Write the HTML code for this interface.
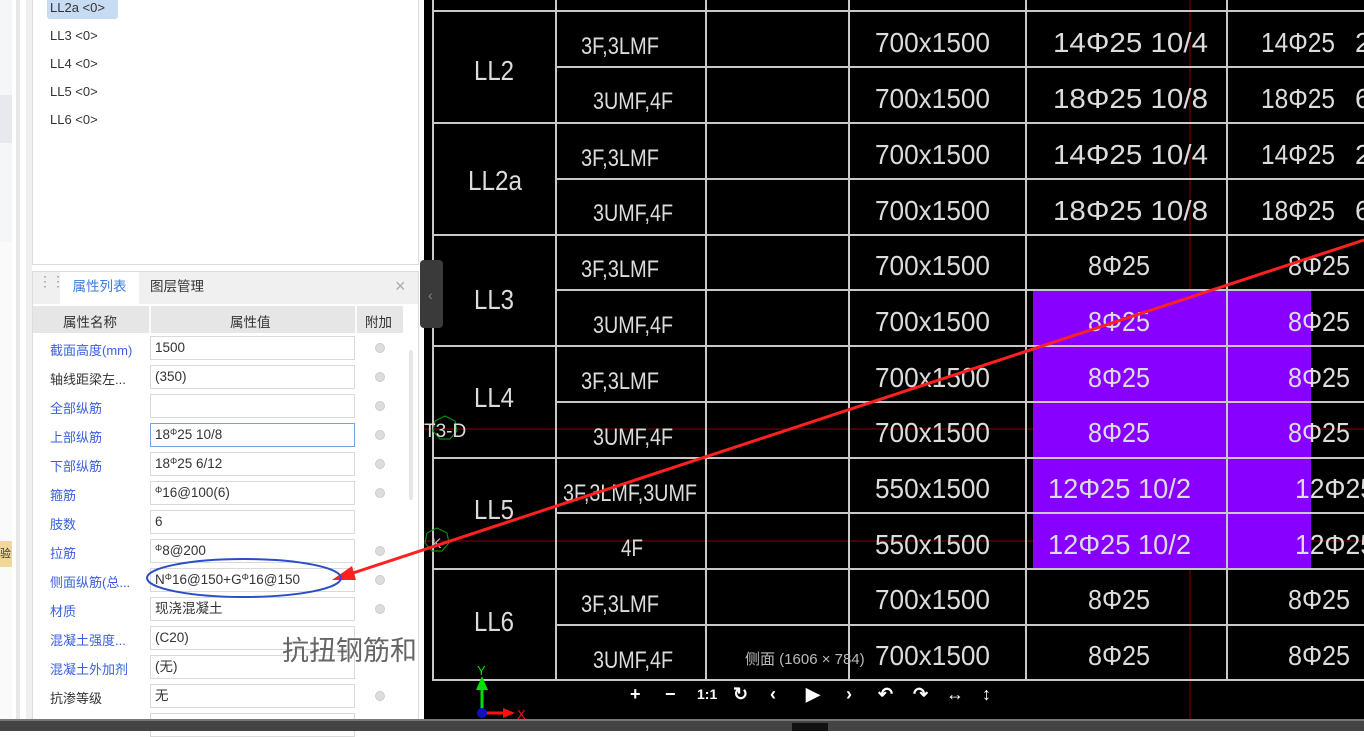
<!DOCTYPE html>
<html><head><meta charset="utf-8"><style>
*{margin:0;padding:0;box-sizing:border-box}
body{width:1364px;height:731px;overflow:hidden;background:#fff;position:relative;font-family:"Liberation Sans","Noto Sans CJK SC",sans-serif;font-size:13px;color:#333}
.abs{position:absolute}
.item{position:absolute;left:50px;font-size:13px;color:#333}
.lbl{position:absolute;left:50px;font-size:13px;color:#3a5fe0;white-space:nowrap}
.lbl.k{color:#333}
.inp{position:absolute;left:150px;width:205px;height:24px;border:1px solid #d9d9d9;background:#fff;padding-left:4px;line-height:22px;font-size:13.5px;color:#333;white-space:nowrap}
.inp i{font-style:normal;font-size:9px;position:relative;top:-4px}
.rad{position:absolute;left:375px;width:10px;height:10px;border-radius:50%;background:#ddd;border:1px solid #ccc}
.c{fill:#dcdcdc;font-family:"DejaVu Sans ExtraLight","Liberation Sans",sans-serif}
</style></head><body>
<div class="abs" style="left:0;top:0;width:12px;height:719px;background:#f5f6f8"></div>
<div class="abs" style="left:0;top:95px;width:12px;height:48px;background:#e8e9ec"></div>
<div class="abs" style="left:0;top:242px;width:12px;height:480px;background:#fafafa"></div>
<div class="abs" style="left:0;top:541px;width:12px;height:26px;background:#f2d79a;font-size:11px;line-height:26px;overflow:hidden">验</div>
<div class="abs" style="left:16px;top:0;width:4px;height:719px;background:#e8e8e8"></div>
<div class="abs" style="left:26px;top:0;width:6px;height:719px;background:#efefef"></div>
<div class="abs" style="left:32px;top:-2px;width:387px;height:267px;border:1px solid #ddd;background:#fff"></div>
<div class="abs" style="left:47px;top:-2px;width:71px;height:21px;background:#c7dcf2;border-radius:3px"></div>
<div class="item" style="top:0px">LL2a &lt;0&gt;</div>
<div class="item" style="top:28px">LL3 &lt;0&gt;</div>
<div class="item" style="top:56px">LL4 &lt;0&gt;</div>
<div class="item" style="top:84px">LL5 &lt;0&gt;</div>
<div class="item" style="top:112px">LL6 &lt;0&gt;</div>
<div class="abs" style="left:32px;top:271px;width:387px;height:460px;border:1px solid #ddd;background:#fff"></div>
<div class="abs" style="left:33px;top:272px;width:385px;height:32px;background:#f0f0f0"></div>
<div class="abs" style="left:38px;top:278px;color:#999;font-size:14px;letter-spacing:-1px;line-height:6px">⋮⋮</div>
<div class="abs" style="left:60px;top:272px;width:79px;height:32px;background:#fff;color:#3a7be0;font-size:13.5px;text-align:center;line-height:30px">属性列表</div>
<div class="abs" style="left:150px;top:272px;color:#333;font-size:13.5px;line-height:30px">图层管理</div>
<div class="abs" style="left:395px;top:276px;color:#aaa;font-size:18px">×</div>
<div class="abs" style="left:33px;top:306px;width:370px;height:27px;background:#e6e6e6"></div>
<div class="abs" style="left:149px;top:306px;width:2px;height:27px;background:#fafafa"></div>
<div class="abs" style="left:355px;top:306px;width:2px;height:27px;background:#fafafa"></div>
<div class="abs" style="left:63px;top:311px;font-size:13.5px">属性名称</div>
<div class="abs" style="left:230px;top:311px;font-size:13.5px">属性值</div>
<div class="abs" style="left:365px;top:311px;font-size:13.5px">附加</div>
<div class="abs" style="left:409px;top:350px;width:4px;height:150px;background:#e6e6e6;border-radius:2px"></div>

<div class="lbl" style="top:340px">截面高度(mm)</div><div class="inp" style="top:336px">1500</div><div class="rad" style="top:343px"></div>
<div class="lbl k" style="top:369px">轴线距梁左...</div><div class="inp" style="top:365px">(350)</div><div class="rad" style="top:372px"></div>
<div class="lbl" style="top:398px">全部纵筋</div><div class="inp" style="top:394px"></div><div class="rad" style="top:401px"></div>
<div class="lbl" style="top:427px">上部纵筋</div><div class="inp" style="top:423px;border-color:#7a9fe0">18<i>Φ</i>25 10/8</div><div class="rad" style="top:430px"></div>
<div class="lbl" style="top:456px">下部纵筋</div><div class="inp" style="top:452px">18<i>Φ</i>25 6/12</div><div class="rad" style="top:459px"></div>
<div class="lbl" style="top:485px">箍筋</div><div class="inp" style="top:481px"><i>Φ</i>16@100(6)</div><div class="rad" style="top:488px"></div>
<div class="lbl" style="top:514px">肢数</div><div class="inp" style="top:510px">6</div>
<div class="lbl" style="top:543px">拉筋</div><div class="inp" style="top:539px"><i>Φ</i>8@200</div><div class="rad" style="top:546px"></div>
<div class="lbl" style="top:572px">侧面纵筋(总...</div><div class="inp" style="top:568px">N<i>Φ</i>16@150+G<i>Φ</i>16@150</div><div class="rad" style="top:575px"></div>
<div class="lbl" style="top:601px">材质</div><div class="inp" style="top:597px">现浇混凝土</div><div class="rad" style="top:604px"></div>
<div class="lbl" style="top:630px">混凝土强度...</div><div class="inp" style="top:626px">(C20)</div>
<div class="lbl" style="top:659px">混凝土外加剂</div><div class="inp" style="top:655px">(无)</div>
<div class="lbl k" style="top:688px">抗渗等级</div><div class="inp" style="top:684px">无</div><div class="rad" style="top:691px"></div>
<div class="inp" style="top:713px"></div>

<svg class="abs" style="left:0;top:0" width="1364" height="731" viewBox="0 0 1364 731">
<rect x="424" y="0" width="940" height="719" fill="#000"/>
<g stroke="#8a0000" stroke-width="1">
<line x1="1190" y1="0" x2="1190" y2="719"/>
<line x1="424" y1="429" x2="1364" y2="429"/>
<line x1="424" y1="541" x2="1364" y2="541"/>
</g>
<rect x="1033" y="290" width="278" height="279" fill="#8800ff"/>
<g stroke="#c8c8c8" stroke-width="2" fill="none">
<line x1="433" y1="0" x2="433" y2="681"/>
<line x1="556" y1="0" x2="556" y2="681"/>
<line x1="706" y1="0" x2="706" y2="681"/>
<line x1="849" y1="0" x2="849" y2="681"/>
<line x1="1026" y1="0" x2="1026" y2="681"/>
<line x1="1227" y1="0" x2="1227" y2="681"/>
<line x1="433" y1="11" x2="1364" y2="11"/>
<line x1="433" y1="123" x2="1364" y2="123"/>
<line x1="433" y1="235" x2="1364" y2="235"/>
<line x1="433" y1="346" x2="1364" y2="346"/>
<line x1="433" y1="458" x2="1364" y2="458"/>
<line x1="433" y1="569" x2="1364" y2="569"/>
<line x1="433" y1="680" x2="1364" y2="680"/>
<line x1="556" y1="67" x2="1364" y2="67"/>
<line x1="556" y1="179" x2="1364" y2="179"/>
<line x1="556" y1="290" x2="1364" y2="290"/>
<line x1="556" y1="402" x2="1364" y2="402"/>
<line x1="556" y1="513" x2="1364" y2="513"/>
<line x1="556" y1="625" x2="1364" y2="625"/>
</g>
<g class="c" font-size="28">
<text x="474" y="80" textLength="40" lengthAdjust="spacingAndGlyphs">LL2</text>
<text x="468" y="190" textLength="54" lengthAdjust="spacingAndGlyphs">LL2a</text>
<text x="474" y="309" textLength="40" lengthAdjust="spacingAndGlyphs">LL3</text>
<text x="474" y="407" textLength="40" lengthAdjust="spacingAndGlyphs">LL4</text>
<text x="474" y="519" textLength="40" lengthAdjust="spacingAndGlyphs">LL5</text>
<text x="474" y="631" textLength="40" lengthAdjust="spacingAndGlyphs">LL6</text>
</g>
<g class="c" font-size="24">
<text x="581" y="54" textLength="78" lengthAdjust="spacingAndGlyphs">3F,3LMF</text>
<text x="593" y="109" textLength="80" lengthAdjust="spacingAndGlyphs">3UMF,4F</text>
<text x="581" y="166" textLength="78" lengthAdjust="spacingAndGlyphs">3F,3LMF</text>
<text x="593" y="221" textLength="80" lengthAdjust="spacingAndGlyphs">3UMF,4F</text>
<text x="581" y="277" textLength="78" lengthAdjust="spacingAndGlyphs">3F,3LMF</text>
<text x="593" y="333" textLength="80" lengthAdjust="spacingAndGlyphs">3UMF,4F</text>
<text x="581" y="389" textLength="78" lengthAdjust="spacingAndGlyphs">3F,3LMF</text>
<text x="593" y="445" textLength="80" lengthAdjust="spacingAndGlyphs">3UMF,4F</text>
<text x="563" y="501" textLength="134" lengthAdjust="spacingAndGlyphs">3F,3LMF,3UMF</text>
<text x="621" y="556" textLength="22" lengthAdjust="spacingAndGlyphs">4F</text>
<text x="581" y="612" textLength="78" lengthAdjust="spacingAndGlyphs">3F,3LMF</text>
<text x="593" y="668" textLength="80" lengthAdjust="spacingAndGlyphs">3UMF,4F</text>
</g>
<g class="c" font-size="28">
<text x="875" y="52" textLength="115" lengthAdjust="spacingAndGlyphs">700x1500</text>
<text x="875" y="108" textLength="115" lengthAdjust="spacingAndGlyphs">700x1500</text>
<text x="875" y="164" textLength="115" lengthAdjust="spacingAndGlyphs">700x1500</text>
<text x="875" y="220" textLength="115" lengthAdjust="spacingAndGlyphs">700x1500</text>
<text x="875" y="275" textLength="115" lengthAdjust="spacingAndGlyphs">700x1500</text>
<text x="875" y="331" textLength="115" lengthAdjust="spacingAndGlyphs">700x1500</text>
<text x="875" y="387" textLength="115" lengthAdjust="spacingAndGlyphs">700x1500</text>
<text x="875" y="442" textLength="115" lengthAdjust="spacingAndGlyphs">700x1500</text>
<text x="875" y="498" textLength="115" lengthAdjust="spacingAndGlyphs">550x1500</text>
<text x="875" y="554" textLength="115" lengthAdjust="spacingAndGlyphs">550x1500</text>
<text x="875" y="609" textLength="115" lengthAdjust="spacingAndGlyphs">700x1500</text>
<text x="875" y="665" textLength="115" lengthAdjust="spacingAndGlyphs">700x1500</text>
<text x="1053" y="52" textLength="155" lengthAdjust="spacingAndGlyphs">14Φ25  10/4</text>
<text x="1053" y="108" textLength="155" lengthAdjust="spacingAndGlyphs">18Φ25  10/8</text>
<text x="1053" y="164" textLength="155" lengthAdjust="spacingAndGlyphs">14Φ25  10/4</text>
<text x="1053" y="220" textLength="155" lengthAdjust="spacingAndGlyphs">18Φ25  10/8</text>
<text x="1088" y="275" textLength="62" lengthAdjust="spacingAndGlyphs">8Φ25</text>
<text x="1088" y="331" textLength="62" lengthAdjust="spacingAndGlyphs">8Φ25</text>
<text x="1088" y="387" textLength="62" lengthAdjust="spacingAndGlyphs">8Φ25</text>
<text x="1088" y="442" textLength="62" lengthAdjust="spacingAndGlyphs">8Φ25</text>
<text x="1048" y="498" textLength="143" lengthAdjust="spacingAndGlyphs">12Φ25 10/2</text>
<text x="1048" y="554" textLength="143" lengthAdjust="spacingAndGlyphs">12Φ25 10/2</text>
<text x="1088" y="609" textLength="62" lengthAdjust="spacingAndGlyphs">8Φ25</text>
<text x="1088" y="665" textLength="62" lengthAdjust="spacingAndGlyphs">8Φ25</text>
<text x="1261" y="52" textLength="74" lengthAdjust="spacingAndGlyphs">14Φ25</text><text x="1355" y="52">2</text>
<text x="1261" y="108" textLength="74" lengthAdjust="spacingAndGlyphs">18Φ25</text><text x="1355" y="108">6</text>
<text x="1261" y="164" textLength="74" lengthAdjust="spacingAndGlyphs">14Φ25</text><text x="1355" y="164">2</text>
<text x="1261" y="220" textLength="74" lengthAdjust="spacingAndGlyphs">18Φ25</text><text x="1355" y="220">6</text>
<text x="1288" y="275" textLength="62" lengthAdjust="spacingAndGlyphs">8Φ25</text>
<text x="1288" y="331" textLength="62" lengthAdjust="spacingAndGlyphs">8Φ25</text>
<text x="1288" y="387" textLength="62" lengthAdjust="spacingAndGlyphs">8Φ25</text>
<text x="1288" y="442" textLength="62" lengthAdjust="spacingAndGlyphs">8Φ25</text>
<text x="1295" y="498" textLength="80" lengthAdjust="spacingAndGlyphs">12Φ25</text>
<text x="1295" y="554" textLength="80" lengthAdjust="spacingAndGlyphs">12Φ25</text>
<text x="1288" y="609" textLength="62" lengthAdjust="spacingAndGlyphs">8Φ25</text>
<text x="1288" y="665" textLength="62" lengthAdjust="spacingAndGlyphs">8Φ25</text>
</g>
<polygon points="445,416 455,421 457,431 450,439 440,439 433,431 435,421" fill="none" stroke="#0a8a0a" stroke-width="1.2"/>
<text x="424" y="437" class="c" font-size="19">T3-D</text>
<polygon points="437,528 447,533 449,543 442,551 432,551 425,543 427,533" fill="none" stroke="#0a8a0a" stroke-width="1.2"/>
<text x="432" y="548" fill="#ccc" font-family="Liberation Sans,sans-serif" font-size="14">K</text>
<rect x="420" y="260" width="23" height="68" rx="4" fill="#3a3a3a"/>
<text x="428" y="300" fill="#888" font-size="14" font-family="Liberation Sans,sans-serif">‹</text>
<text x="282" y="660" fill="#666" font-family="Liberation Sans,Noto Sans CJK SC,sans-serif" font-size="27">抗扭钢筋和</text>
<text x="745" y="664" fill="#bbb" font-family="Liberation Sans,Noto Sans CJK SC,sans-serif" font-size="15">侧面 (1606 × 784)</text>
<line x1="1364" y1="240" x2="350" y2="574" stroke="#ff2020" stroke-width="3"/>
<polygon points="332,580 352,566 356,580" fill="#ff2020"/>
<ellipse cx="244" cy="578" rx="97" ry="19" fill="none" stroke="#2a4ec8" stroke-width="2"/>
<g fill="#fff" font-family="Liberation Sans,sans-serif" font-weight="bold" font-size="18">
<text x="630" y="700">+</text><text x="665" y="700">−</text><text x="697" y="699" font-size="14">1:1</text>
<text x="733" y="700">↻</text><text x="770" y="700">‹</text><text x="806" y="700">▶</text><text x="846" y="700">›</text>
<text x="878" y="700">↶</text><text x="913" y="700">↷</text><text x="946" y="700">↔</text><text x="982" y="700">↕</text>
</g>
<line x1="482" y1="713" x2="482" y2="688" stroke="#00e000" stroke-width="3"/>
<polygon points="476,690 488,690 482,676" fill="#00e000"/>
<text x="477" y="675" fill="#00e000" font-size="13" font-family="Liberation Sans,sans-serif">Y</text>
<line x1="482" y1="713" x2="505" y2="713" stroke="#ff1010" stroke-width="3"/>
<polygon points="503,708 503,718 515,713" fill="#ff1010"/>
<text x="517" y="719" fill="#ff1010" font-size="13" font-family="Liberation Sans,sans-serif">X</text>
<circle cx="482" cy="713" r="5" fill="#1010c0"/>
<rect x="0" y="719" width="1364" height="12" fill="#444"/>
<rect x="0" y="719" width="1364" height="2" fill="#777"/>
<rect x="792" y="723" width="36" height="8" fill="#111"/>
</svg>
</body></html>
